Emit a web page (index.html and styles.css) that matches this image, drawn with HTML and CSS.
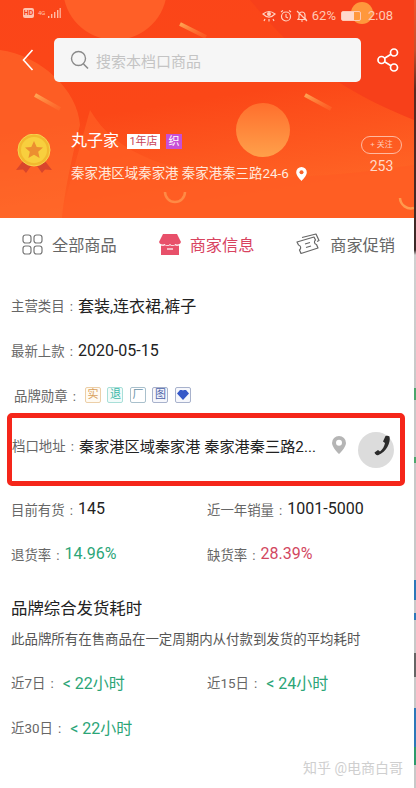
FILE: index.html
```html
<!DOCTYPE html>
<html lang="zh-CN">
<head>
  <meta charset="UTF-8">
  <meta name="viewport" content="width=device-width, initial-scale=1.0">
  <title>商家信息</title>
  <link rel="stylesheet" href="styles.css">
</head>
<body>
  <div class="screen">
    <!-- Header -->
    <header class="header">
      <svg class="header-bg" width="414" height="218" viewBox="0 0 414 218">
        <defs>
          <linearGradient id="sky" x1="0" y1="0" x2="0.3" y2="1">
            <stop offset="0" stop-color="#fb4519"/>
            <stop offset="0.55" stop-color="#fb4717"/>
            <stop offset="1" stop-color="#ff6425"/>
          </linearGradient>
          <linearGradient id="ball" x1="0" y1="0" x2="0" y2="1">
            <stop offset="0" stop-color="#ff6f2d"/>
            <stop offset="1" stop-color="#ffa04a"/>
          </linearGradient>
          <linearGradient id="streak" x1="0" y1="0" x2="1" y2="1">
            <stop offset="0" stop-color="#ffb35c" stop-opacity="0.85"/>
            <stop offset="1" stop-color="#ff7a35" stop-opacity="0.3"/>
          </linearGradient>
        </defs>
        <rect width="414" height="218" fill="url(#sky)"/>
        <path d="M414 0H250C300 60 340 90 414 120Z" fill="#f7401a"/>
        <path d="M90 110C130 180 250 190 414 165V218H60Z" fill="#ff5c23" opacity="0.8"/>
        <circle cx="115" cy="-12" r="52" fill="#ff5f27"/>
        <path d="M0 50C40 55 78 90 80 125C70 165 64 195 62 218H0Z" fill="#ff6d2d" opacity="0.6"/>
        <circle cx="263" cy="130" r="27" fill="url(#ball)"/>
        <circle cx="362" cy="13" r="11" fill="#ff983c"/>
        <path d="M180 24L206 37" stroke="url(#streak)" stroke-width="4"/>
        <path d="M35 95L60 109" stroke="url(#streak)" stroke-width="4"/>
        <path d="M305 95L331 109" stroke="url(#streak)" stroke-width="4"/>
        <path d="M165 192A10 10 0 0 0 185 192" fill="none" stroke="#ff8a45" stroke-width="2.500"/>
        <path d="M400 198A11 11 0 0 0 414 208" fill="none" stroke="#ff9a4d" stroke-width="2.500"/>
      </svg>

      <div class="status-bar">
        <div class="status-left">
          <span class="hd">HD</span>
          <span class="net">4G</span>
          <svg width="14" height="10" viewBox="0 0 14 10">
            <path d="M1 8h1.400v2H1zM4 6h1.400v4H4zM7 4h1.400v6H7zM10 2h1.400v8H10zM12.600 0h1.200v10h-1.200z" fill="#ffb9a4"/>
          </svg>
        </div>
        <div class="status-right">
          <svg width="14" height="12" viewBox="0 0 14 12">
            <path d="M1 4Q7 -1 13 4Q7 10 1 4ZM3 9l-1 2M7 9v2.500M11 9l1 2" fill="none" stroke="#ffd2c2" stroke-width="1.200"/>
            <circle cx="7" cy="4" r="2" fill="#ffd2c2"/>
          </svg>
          <svg width="12" height="12" viewBox="0 0 12 12">
            <circle cx="6" cy="6.500" r="4.500" fill="none" stroke="#ffd2c2" stroke-width="1.200"/>
            <path d="M6 4v3l2 1M1 2l2-1.500M11 2L9 .5" fill="none" stroke="#ffd2c2" stroke-width="1.100"/>
          </svg>
          <svg width="12" height="12" viewBox="0 0 12 12">
            <path d="M2 9.500h8L9 8V5a3 3 0 0 0-6 0v3zM5 11h2M1 1l10 10" fill="none" stroke="#ffd2c2" stroke-width="1.200"/>
          </svg>
          <span class="status-text">62%</span>
          <span class="battery"><span class="battery-fill"></span></span>
          <span class="status-text clock">2:08</span>
        </div>
      </div>

      <div class="search-row">
        <svg class="back" width="12" height="22" viewBox="0 0 12 22">
          <path d="M10.500 1L1.500 11l9 10" fill="none" stroke="#fff" stroke-width="1.600"/>
        </svg>
        <div class="search-box">
          <svg width="20" height="20" viewBox="0 0 20 20">
            <circle cx="8.500" cy="8.500" r="7" fill="none" stroke="#8a8a8a" stroke-width="1.400"/>
            <path d="M13.500 14l4.500 4.500" stroke="#8a8a8a" stroke-width="1.600"/>
          </svg>
          <span class="search-hint">搜索本档口商品</span>
        </div>
        <svg class="share" width="22" height="24" viewBox="0 0 22 24">
          <g fill="none" stroke="#fff" stroke-width="1.700">
            <circle cx="4.500" cy="12" r="3.500"/>
            <circle cx="17" cy="4.500" r="3.500"/>
            <circle cx="17" cy="19.500" r="3.500"/>
            <path d="M7.500 10.200l6.500-4M7.500 13.800l6.500 4"/>
          </g>
        </svg>
      </div>

      <div class="shop">
        <svg class="medal" width="38" height="42" viewBox="0 0 38 42">
          <path d="M8 27L1 36l7-.5 3 3.500 5-7zM30 27l7 9-7-.5-3 3.500-5-7z" fill="#d9452c"/>
          <circle cx="19" cy="16" r="16" fill="#f2b92f" stroke="#f7d34f" stroke-width="1"/>
          <circle cx="19" cy="16" r="13" fill="#f8cf3e"/>
          <path d="M19 7l2.700 6 6.300.6-4.800 4.200 1.400 6.200-5.600-3.300-5.600 3.300 1.400-6.200-4.800-4.200 6.300-.6z" fill="#ec8f30"/>
        </svg>
        <div class="shop-main">
          <div class="shop-title">
            <span class="shop-name">丸子家</span>
            <span class="tag-year">1年店</span>
            <span class="tag-weave">织</span>
          </div>
          <div class="shop-addr">
            <span>秦家港区域秦家港 秦家港秦三路24-6</span>
            <svg width="11" height="14" viewBox="0 0 11 14">
              <path d="M5.500 0A5.300 5.300 0 0 0 .2 5.300C.2 9 5.500 14 5.500 14s5.300-5 5.300-8.700A5.300 5.300 0 0 0 5.500 0z" fill="#fff"/>
              <circle cx="5.500" cy="5.300" r="2" fill="#f9622a"/>
            </svg>
          </div>
        </div>
        <div class="follow">
          <span class="follow-btn">+ 关注</span>
          <span class="follow-count">253</span>
        </div>
      </div>
    </header>

    <!-- Tabs -->
    <nav class="tabs">
      <div class="tab">
        <svg width="21" height="21" viewBox="0 0 21 21">
          <g fill="none" stroke="#777" stroke-width="1.200">
            <rect x="1" y="1" width="8" height="8" rx="2.500"/>
            <rect x="12" y="1" width="8" height="8" rx="2.500"/>
            <rect x="1" y="12" width="8" height="8" rx="2.500"/>
            <rect x="12" y="12" width="8" height="8" rx="2.500"/>
          </g>
        </svg>
        <span>全部商品</span>
      </div>
      <div class="tab tab-on">
        <svg width="22" height="21" viewBox="0 0 22 21">
          <path d="M4 0h14l4 8a3.700 3.700 0 0 1-5.500 2A3.800 3.800 0 0 1 11 10a3.800 3.800 0 0 1-5.500 0A3.700 3.700 0 0 1 0 8z" fill="#e8506a"/>
          <path d="M2 11.500a5 5 0 0 0 4-.2 5.500 5.500 0 0 0 5 0 5.500 5.500 0 0 0 5 0 5 5 0 0 0 4 .2V21H2z" fill="#e8506a"/>
          <path d="M8 15h6" stroke="#fff" stroke-width="1.200"/>
        </svg>
        <span>商家信息</span>
      </div>
      <div class="tab">
        <svg width="26" height="22" viewBox="0 0 26 22">
          <g fill="none" stroke="#666" stroke-width="1.200" stroke-linejoin="round">
            <path d="M2 9l17-5 1.500 3a2.500 2.500 0 0 0 1 4.500L23 15 6 20.500 4.500 17a2.800 2.800 0 0 0-1-5z"/>
            <path d="M7 4.500L21 1l3 6.500-2 1M10 11l5-1.500M11 14.500l5-1.500"/>
          </g>
        </svg>
        <span>商家促销</span>
      </div>
    </nav>

    <!-- Details -->
    <main class="info">
      <div class="row">
        <span class="label">主营类目<span class="colon">:</span></span>
        <span class="value">套装,连衣裙,裤子</span>
      </div>
      <div class="row">
        <span class="label">最新上款<span class="colon">:</span></span>
        <span class="value">2020-05-15</span>
      </div>
      <div class="row row-badges">
        <span class="label">品牌勋章<span class="colon">:</span></span>
        <div class="badges">
          <span class="badge badge-orange">实</span>
          <span class="badge badge-teal">退</span>
          <span class="badge badge-slate">厂</span>
          <span class="badge badge-blue">图</span>
          <span class="badge badge-blue">
            <svg width="12" height="10" viewBox="0 0 12 10"><path d="M3 0h2.500L6 1l.5-1H9l3 3.500L6 10 0 3.500z" fill="#3558c8"/></svg>
          </span>
        </div>
      </div>

      <div class="row-addr">
        <span class="label">档口地址<span class="colon">:</span></span>
        <span class="value value-addr">秦家港区域秦家港 秦家港秦三路2...</span>
        <svg class="addr-pin" width="14" height="18" viewBox="0 0 14 18">
          <path d="M7 0A7 7 0 0 0 0 7c0 4.500 7 11 7 11s7-6.500 7-11a7 7 0 0 0-7-7z" fill="#b5b5b5"/>
          <circle cx="7" cy="6.800" r="3" fill="#fff"/>
        </svg>
        <div class="call">
          <svg width="18" height="21" viewBox="0 0 18 21">
            <path d="M16.500 1.500c1.500 6-3.500 15.500-11 18.500-2 .8-3.500-1-4-2.500l3.500-2.500 2 1.500c2.500-2 4.500-5.500 5-8.500L10 6.500l2.500-5.500c1.500-.5 3-.5 4 .5z" fill="#2b2b2b"/>
          </svg>
        </div>
      </div>

      <div class="stats">
        <div class="stat"><span class="label">目前有货<span class="colon">:</span></span><span class="value">145</span></div>
        <div class="stat"><span class="label">近一年销量<span class="colon">:</span></span><span class="value">1001-5000</span></div>
        <div class="stat"><span class="label">退货率<span class="colon">:</span></span><span class="value good">14.96%</span></div>
        <div class="stat"><span class="label">缺货率<span class="colon">:</span></span><span class="value bad">28.39%</span></div>
      </div>

      <h2 class="section-title">品牌综合发货耗时</h2>
      <p class="section-desc">此品牌所有在售商品在一定周期内从付款到发货的平均耗时</p>

      <div class="stats stats-time">
        <div class="stat"><span class="label">近7日<span class="colon">:</span></span><span class="value good">&lt; 22小时</span></div>
        <div class="stat"><span class="label">近15日<span class="colon">:</span></span><span class="value good">&lt; 24小时</span></div>
        <div class="stat"><span class="label">近30日<span class="colon">:</span></span><span class="value good">&lt; 22小时</span></div>
      </div>

      <div class="watermark">知乎 @电商白哥</div>
    </main>
  </div>
  <div class="edge"></div>
</body>
</html>
```

FILE: styles.css
```css
* {
  box-sizing: border-box;
}

html, body {
  margin: 0;
  padding: 0;
  height: 788px;
  overflow: hidden;
}

body {
  display: flex;
  font-family: Roboto, "Noto Sans CJK SC", sans-serif;
  background: #fff;
  color: #222;
}

.screen {
  flex: 1;
  min-width: 0;
}

/* Thin strip of the next picture on the right */
.edge {
  width: 2px;
  background: linear-gradient(to bottom,
    #f0552c 0, #c8502c 50px, #5a2a20 90px, #3a2a28 250px,
    #d0d0d0 255px, #c8c8c8 388px, #4ca56c 388px, #4ca56c 400px,
    #c8c8c8 400px, #c8c8c8 457px, #4ca56c 457px, #4ca56c 463px,
    #c8c8c8 463px, #c8c8c8 580px, #2e78b8 580px, #2e78b8 600px,
    #c8c8c8 600px, #c8c8c8 613px, #2e78b8 613px, #2e78b8 620px,
    #c8c8c8 620px, #c8c8c8 653px, #666 653px, #666 677px,
    #c8c8c8 677px, #c8c8c8 708px, #2e78b8 708px, #2e78b8 747px,
    #2e9a6c 747px, #2e9a6c 765px, #c8c8c8 765px);
}

/* Header */
.header {
  position: relative;
  height: 218px;
  color: #fff;
}

.header-bg {
  position: absolute;
  top: 0;
  left: 0;
}

.status-bar, .search-row, .shop {
  position: relative;
}

.status-bar {
  height: 30px;
  padding: 8px 21px 0 23px;
  display: flex;
  justify-content: space-between;
  align-items: flex-start;
}

.status-left {
  display: flex;
  align-items: center;
  gap: 1px;
}

.hd {
  width: 11px;
  height: 10px;
  margin-right: 3px;
  border-radius: 2px;
  background: #ffc4b0;
  color: #f5431c;
  font-size: 7px;
  font-weight: 700;
  line-height: 10px;
  text-align: center;
}

.net {
  font-size: 6px;
  color: #ffc4b0;
  line-height: 10px;
  width: 8px;
}

.status-right {
  display: flex;
  align-items: center;
  gap: 4px;
  height: 15px;
}

.status-text {
  font-size: 13px;
  color: #ffc9b5;
  line-height: 15px;
}

.clock {
  margin-left: 3px;
}

.battery {
  width: 20px;
  height: 10px;
  margin-left: 1px;
  border: 1px solid #ffc9b5;
  border-radius: 2px;
  display: block;
}

.battery-fill {
  display: block;
  width: 12px;
  height: 8px;
  background: #ffd9cb;
}

.search-row {
  height: 44px;
  margin-top: 8px;
  padding: 0 0 0 22px;
  display: flex;
  align-items: center;
}

.back, .share {
  flex: none;
}

.search-box {
  flex: none;
  width: 307px;
  height: 44px;
  margin: 0 16px 0 20px;
  padding: 0 0 0 16px;
  background: #f6f6f6;
  border-radius: 5px;
  display: flex;
  align-items: center;
  gap: 6px;
}

.search-hint {
  font-size: 15px;
  color: #c4c4c4;
}

.shop {
  margin-top: 49px;
  height: 50px;
  padding: 0 12px 0 15px;
  display: flex;
  align-items: flex-start;
}

.medal {
  flex: none;
  margin-top: 3px;
}

.shop-main {
  flex: 1;
  margin-left: 18px;
}

.shop-title {
  display: flex;
  align-items: center;
  height: 22px;
  margin-top: -1px;
}

.shop-name {
  width: 56px;
  font-size: 16px;
  line-height: 22px;
}

.tag-year {
  width: 33px;
  height: 15px;
  background: #fff;
  color: #c9465a;
  font-size: 11px;
  line-height: 15px;
  text-align: center;
}

.tag-weave {
  width: 16px;
  height: 15px;
  margin-left: 6px;
  background: #c84fd6;
  color: #fff;
  font-size: 11px;
  line-height: 15px;
  text-align: center;
}

.shop-addr {
  margin-top: 13px;
  display: flex;
  align-items: center;
  gap: 7px;
  font-size: 13.450px;
  line-height: 18px;
  white-space: nowrap;
  color: #ffe9dd;
}

.follow {
  width: 41px;
  margin-top: 5px;
  display: flex;
  flex-direction: column;
  align-items: center;
}

.follow-btn {
  width: 41px;
  height: 18px;
  border: 1px solid #ffb9a0;
  border-radius: 9px;
  font-size: 8px;
  line-height: 16px;
  text-align: center;
  color: #ffc9b5;
}

.follow-count {
  margin-top: 3px;
  font-size: 14px;
  line-height: 18px;
  color: #ffd9c8;
}

/* Tabs */
.tabs {
  height: 54px;
  padding: 0 19px 2px 22px;
  display: flex;
  justify-content: space-between;
  align-items: center;
}

.tab {
  display: flex;
  align-items: center;
  gap: 9px;
  font-size: 16.2px;
  color: #666;
}

.tab-on {
  margin-left: 1px;
  color: #d8435f;
}

/* Details */
.info {
  padding: 10px 0 0;
}

.label {
  font-size: 13.4px;
  color: #666;
  white-space: nowrap;
}

.colon {
  display: inline-block;
  width: 13.4px;
  text-align: center;
}

.value {
  font-size: 16px;
  color: #222;
  white-space: nowrap;
}

.good {
  color: #2ba577;
}

.bad {
  color: #d2475f;
}

.row {
  height: 45.5px;
  padding-left: 11px;
  display: flex;
  align-items: center;
}

.row-badges {
  height: 40px;
  padding: 3px 0 0 14px;
}

.row-badges .label {
  margin-right: 4px;
}

.badges {
  display: flex;
  gap: 6.500px;
}

.badge {
  width: 16px;
  height: 16px;
  border: 1px solid;
  border-radius: 2px;
  font-size: 11px;
  line-height: 14px;
  text-align: center;
  display: flex;
  align-items: center;
  justify-content: center;
}

.badge-orange {
  color: #d9a05c;
  border-color: #eccfa8;
  background: #fffaf2;
}

.badge-teal {
  color: #3cb8a8;
  border-color: #a8dfd8;
  background: #f2fbfa;
}

.badge-slate {
  color: #6a93a8;
  border-color: #a9c0cc;
}

.badge-blue {
  color: #4a62a8;
  border-color: #a8b2cc;
  background: #f6f7fc;
}

.row-addr {
  height: 73px;
  margin: 0 9px 0 7px;
  padding: 0 6px 10px 0;
  border: 5px solid #f5261a;
  border-radius: 5px;
  display: flex;
  align-items: center;
  position: relative;
}

.row-addr .label {
  flex: none;
}

.value-addr {
  width: 237px;
  flex: none;
  overflow: hidden;
  font-size: 15.200px;
}

.addr-pin {
  flex: none;
  margin-left: 16px;
}

.call {
  position: absolute;
  top: 14px;
  right: 6px;
  width: 36px;
  height: 36px;
  border-radius: 50%;
  background: #dcdcdc;
  display: flex;
  align-items: flex-start;
  justify-content: flex-end;
  padding: 3px 3px 0 0;
}

.stats {
  display: grid;
  grid-template-columns: 196px 1fr;
  padding: 0 0 0 11px;
}

.stat {
  height: 45px;
  display: flex;
  align-items: center;
}

.section-title {
  margin: 21px 0 0 11px;
  font-size: 16.4px;
  font-weight: 400;
  line-height: 24px;
  color: #222;
}

.section-desc {
  margin: 9px 0 0 11px;
  font-size: 13.450px;
  line-height: 20px;
  color: #555;
  white-space: nowrap;
}

.stats-time {
  padding-top: 9px;
}

.stats-time .label {
  margin-right: 4px;
}

.watermark {
  margin-top: 8px;
  padding-right: 11px;
  text-align: right;
  font-size: 14px;
  color: #cfcfcf;
}
```
